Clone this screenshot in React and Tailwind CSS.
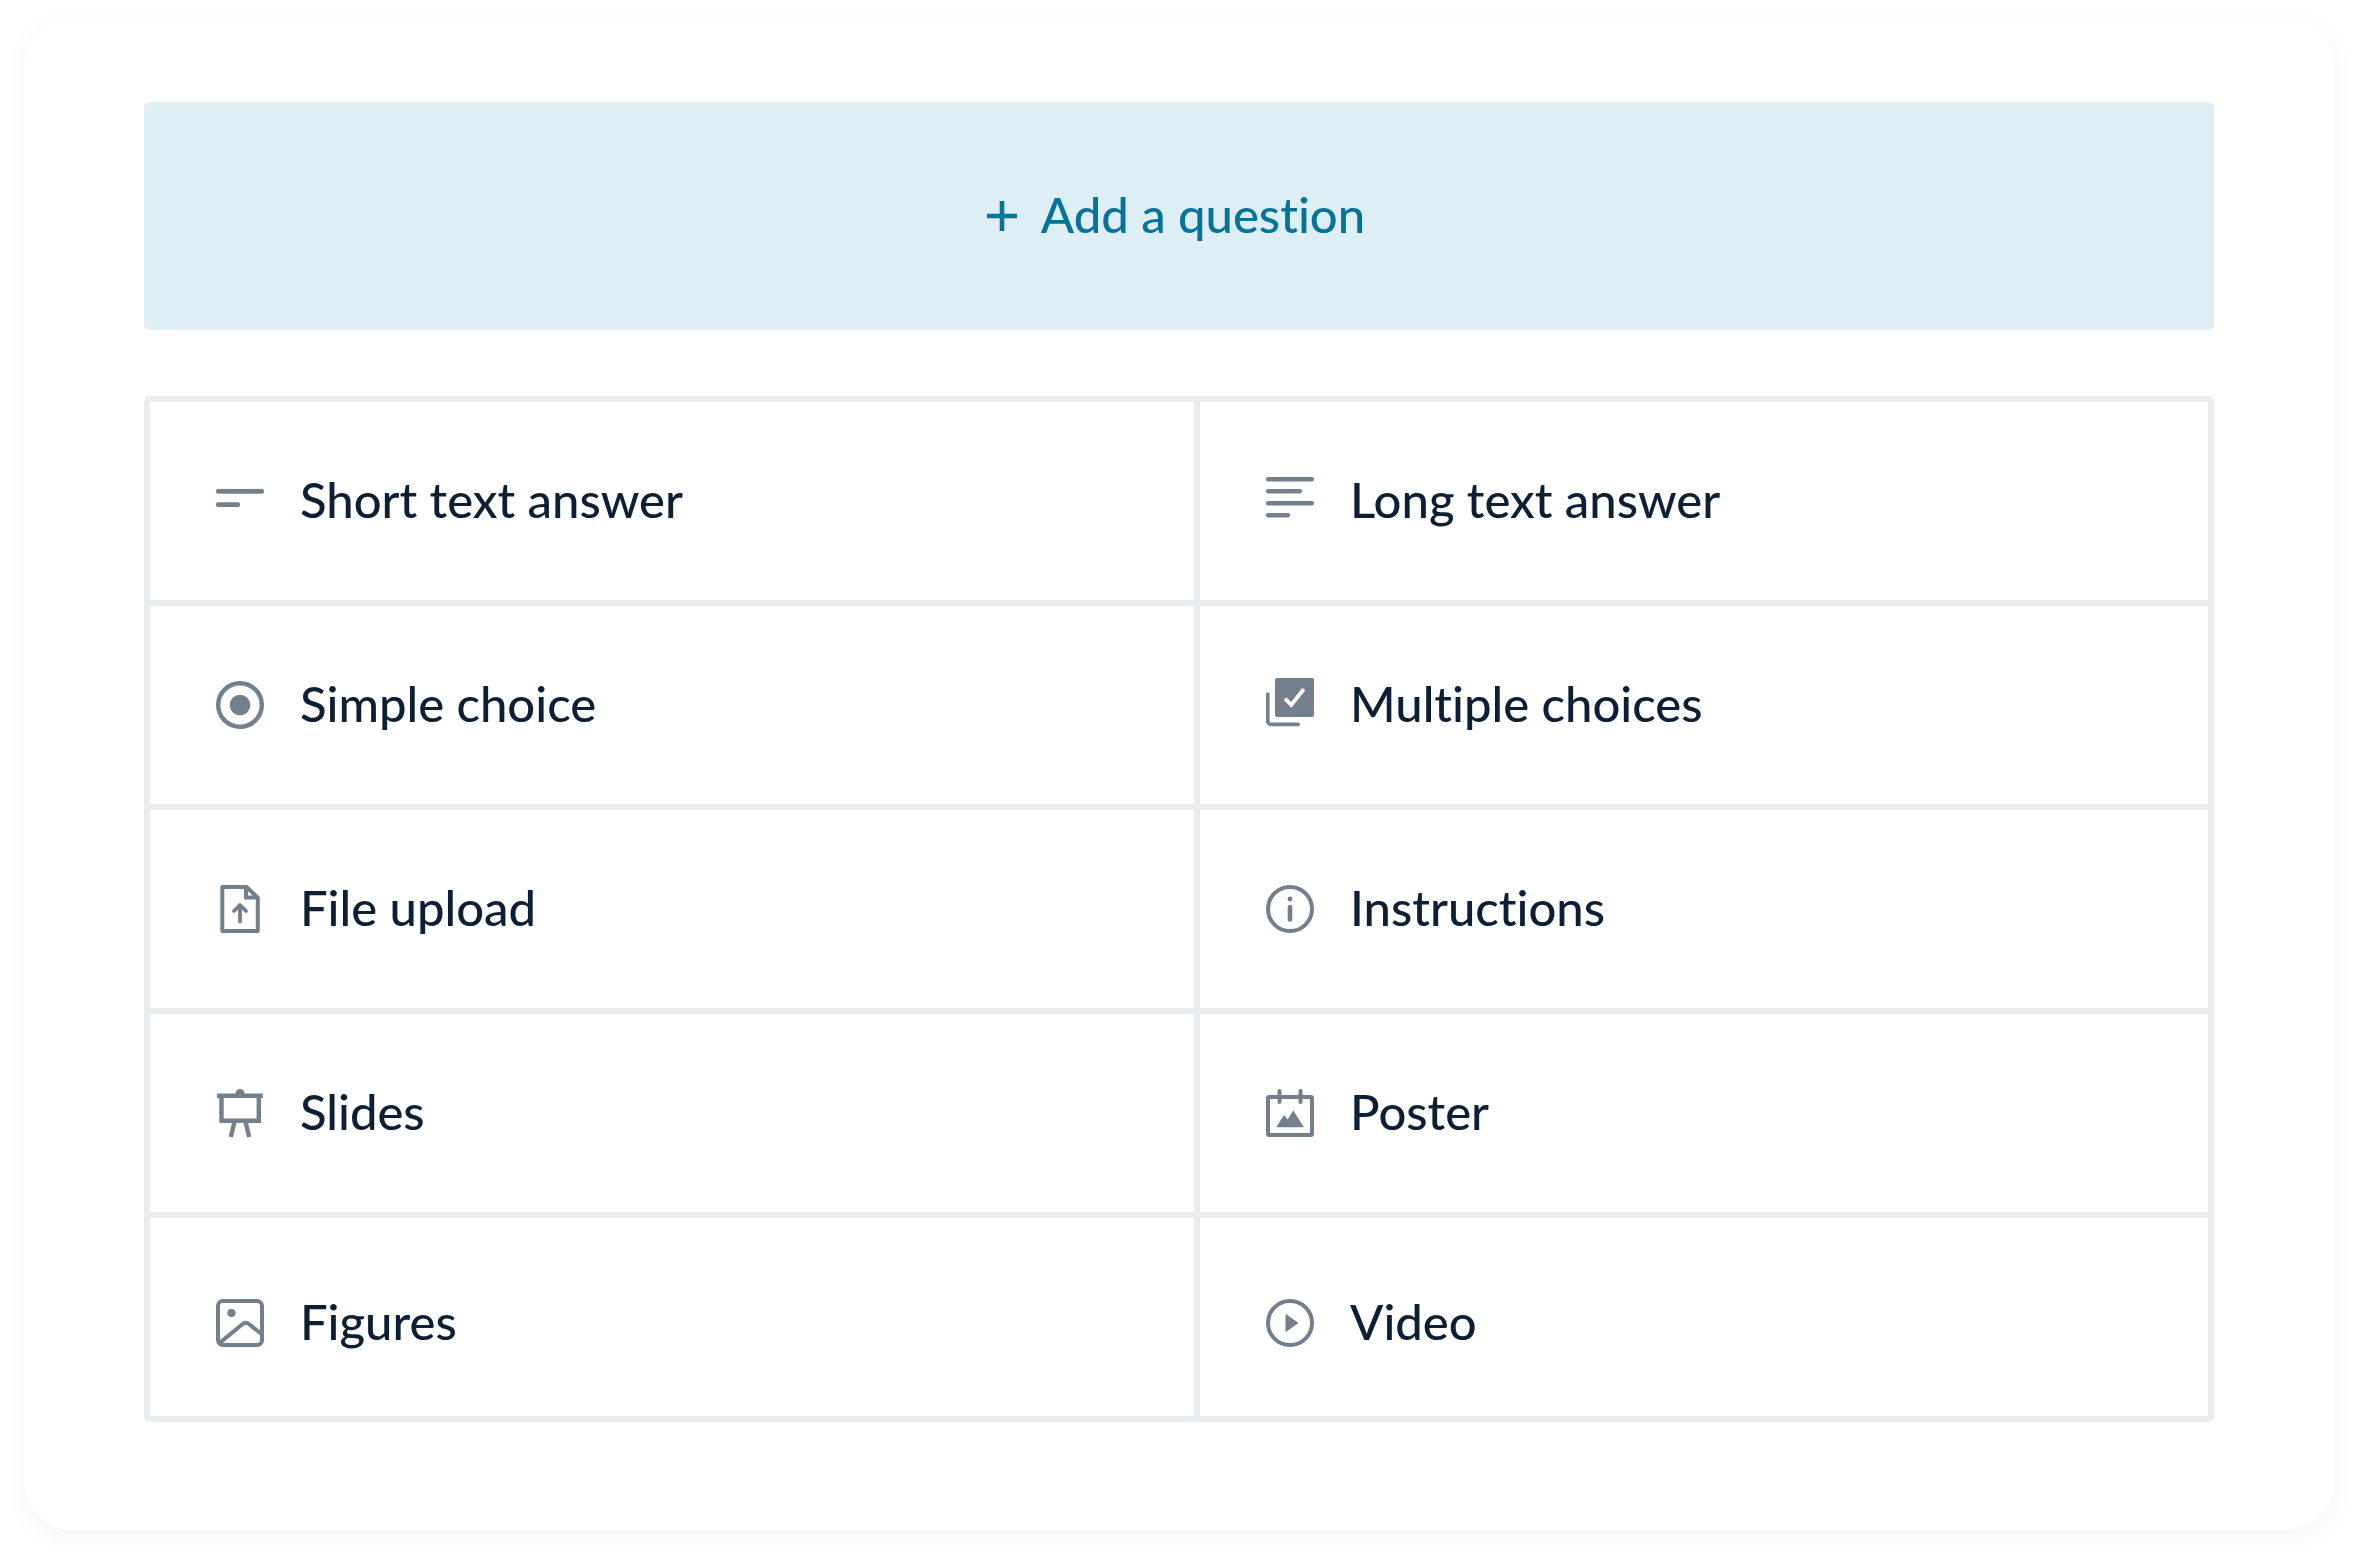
import React from 'react';

const questionTypes = [
  { id: 'short', label: 'Short text answer', icon: ShortTextIcon },
  { id: 'long', label: 'Long text answer', icon: LongTextIcon },
  { id: 'simple', label: 'Simple choice', icon: RadioIcon },
  { id: 'multiple', label: 'Multiple choices', icon: ChecksIcon },
  { id: 'file', label: 'File upload', icon: FileUploadIcon },
  { id: 'instructions', label: 'Instructions', icon: InfoIcon },
  { id: 'slides', label: 'Slides', icon: SlidesIcon },
  { id: 'poster', label: 'Poster', icon: PosterIcon },
  { id: 'figures', label: 'Figures', icon: FiguresIcon, last: true },
  { id: 'video', label: 'Video', icon: VideoIcon, last: true },
];

function Icon({ children }) {
  return (
    <svg viewBox="0 0 48 48" fill="none" stroke="currentColor" strokeWidth="4" aria-hidden="true"
      className="size-12 shrink-0 overflow-visible text-[#737f8d]">
      {children}
    </svg>
  );
}

function ShortTextIcon() {
  return (
    <Icon>
      <g fill="currentColor" stroke="none">
        <rect x="0" y="12" width="48" height="4.7" rx="2" />
        <rect x="0" y="25.3" width="24" height="4.7" rx="2" />
      </g>
    </Icon>
  );
}

function LongTextIcon() {
  return (
    <Icon>
      <g fill="currentColor" stroke="none">
        <rect x="0" y="0" width="48" height="4.5" rx="2" />
        <rect x="0" y="12" width="36" height="4.5" rx="2" />
        <rect x="0" y="24" width="48" height="4.5" rx="2" />
        <rect x="0" y="36" width="24" height="4.5" rx="2" />
      </g>
    </Icon>
  );
}

function RadioIcon() {
  return (
    <Icon>
      <circle cx="24" cy="24" r="21.8" strokeWidth="4.4" />
      <circle cx="24" cy="24" r="10.3" fill="currentColor" stroke="none" />
    </Icon>
  );
}

function ChecksIcon() {
  return (
    <Icon>
      <rect x="9" y="-3" width="39" height="39" rx="2" fill="currentColor" stroke="none" />
      <path d="M1.8 13V40.4a3 3 0 0 0 3 3H32.2" strokeWidth="3.6" strokeLinecap="round" />
      <path d="M19 17.6l6.3 6.2L37.8 8.2" stroke="#fff" strokeWidth="3.8" />
    </Icon>
  );
}

function FileUploadIcon() {
  return (
    <Icon>
      <path d="M6.3 2H30.6L41.8 12.6V46H6.3Z" strokeLinejoin="round" />
      <path d="M30 2V12.6H41.8" />
      <path d="M24 36.6V20.4M18 26l6-6 6 6" strokeWidth="3.8" strokeLinecap="round" strokeLinejoin="round" />
    </Icon>
  );
}

function InfoIcon() {
  return (
    <Icon>
      <circle cx="24" cy="24" r="22" />
      <circle cx="24" cy="14" r="2.4" fill="currentColor" stroke="none" />
      <path d="M24 22V34.4" strokeWidth="4.6" strokeLinecap="round" />
    </Icon>
  );
}

function SlidesIcon() {
  return (
    <Icon>
      <circle cx="24" cy="4.5" r="4.5" fill="currentColor" stroke="none" />
      <path d="M1 6.7H46.8" strokeWidth="4.6" />
      <path d="M5.5 6.7V31.7H42.8V6.7M18.6 32.5L14.8 48M29.4 32.5L33.2 48" strokeWidth="4.4" />
    </Icon>
  );
}

function PosterIcon() {
  return (
    <Icon>
      <rect x="2" y="8" width="44" height="38" rx="1" />
      <path d="M13.5 2V13M34.5 2V13" strokeLinecap="round" />
      <path d="M10.3 38.3L18 26l3.6 4.4 5.7-8.8L37.8 38.3Z" fill="currentColor" stroke="none" />
    </Icon>
  );
}

function FiguresIcon() {
  return (
    <Icon>
      <rect x="2" y="2" width="44" height="44" rx="5" />
      <circle cx="15.5" cy="14" r="4.1" fill="currentColor" stroke="none" />
      <path d="M4 43.6L27 24.8Q29.7 22.8 32.4 24.6L45.5 35" />
    </Icon>
  );
}

function VideoIcon() {
  return (
    <Icon>
      <circle cx="24" cy="24" r="22" />
      <path d="M20 15.6V32.4L31.8 24Z" fill="currentColor" strokeWidth="1" strokeLinejoin="round" />
    </Icon>
  );
}

export default function App() {
  return (
    <div className="px-6 pt-[18px] pb-[30px] bg-white font-['Lato',sans-serif] text-[49px] font-medium [font-variant-ligatures:none]">
      <main className="rounded-[48px] bg-white px-30 pt-21 pb-27 shadow-[0_6px_24px_rgba(0,0,0,0.05)]">
        <button type="button" className="flex w-full items-center justify-center gap-6 rounded-md bg-[#deeef5] py-[82px] pr-1.5 leading-[60px] text-[#05729a]">
          <svg viewBox="0 0 30 30" fill="none" stroke="currentColor" strokeWidth="4.6" aria-hidden="true" className="size-[30px]">
            <path d="M15 0V30M0 15H30" />
          </svg>
          <span className="pb-1">Add a question</span>
        </button>
        <div className="mt-[66px] grid grid-cols-[29fr_28fr] gap-1.5 rounded-md border-6 border-[#e9edf0] bg-[#e9edf0]">
          {questionTypes.map(q => (
            <button key={q.id} type="button"
              className={`flex h-[198px] items-center gap-9 bg-white px-[66px] text-left leading-[60px] text-[#0d1f35] ${q.last ? 'pt-3' : ''}`}>
              <q.icon />
              <span className="pb-1">{q.label}</span>
            </button>
          ))}
        </div>
      </main>
    </div>
  );
}
